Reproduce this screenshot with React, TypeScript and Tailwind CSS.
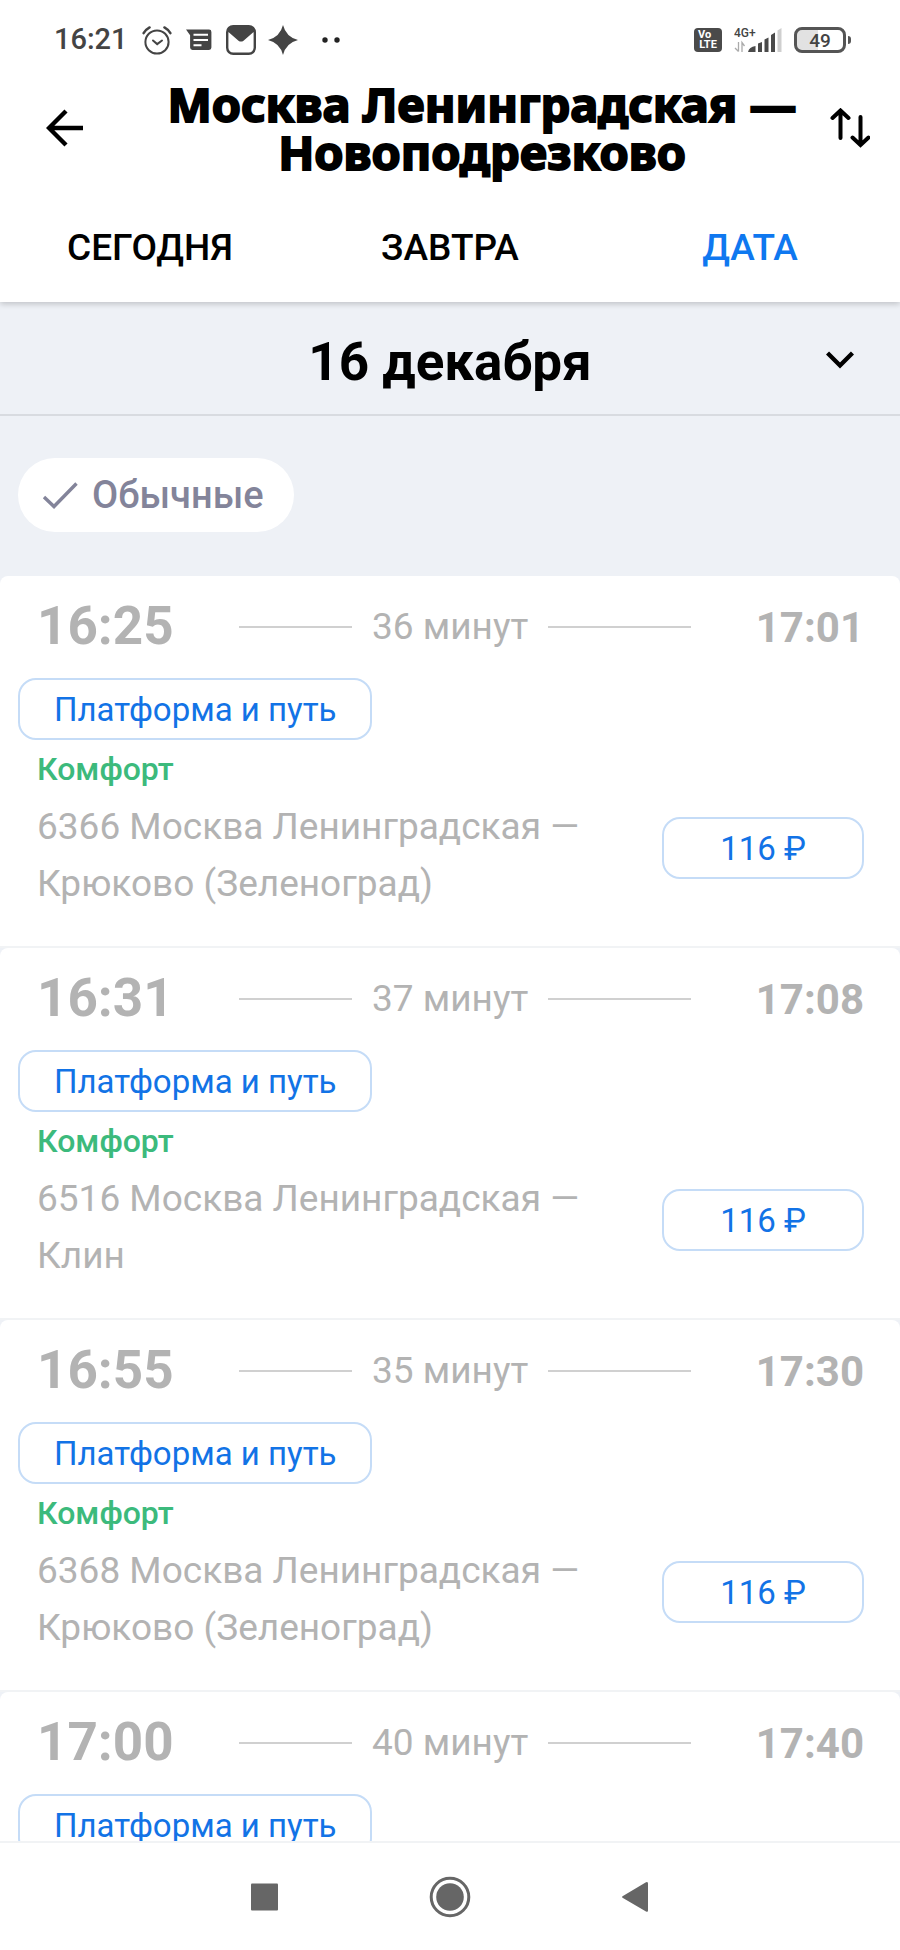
import React from 'react';

interface Train {
  departure: string;
  arrival: string;
  duration: string;
  route?: string;
  price?: string;
}

const trains: Train[] = [
  { departure: '16:25', arrival: '17:01', duration: '36 минут', route: '6366 Москва Ленинградская — Крюково (Зеленоград)', price: '116 ₽' },
  { departure: '16:31', arrival: '17:08', duration: '37 минут', route: '6516 Москва Ленинградская — Клин', price: '116 ₽' },
  { departure: '16:55', arrival: '17:30', duration: '35 минут', route: '6368 Москва Ленинградская — Крюково (Зеленоград)', price: '116 ₽' },
  { departure: '17:00', arrival: '17:40', duration: '40 минут' },
];

const tabs = ['СЕГОДНЯ', 'ЗАВТРА', 'ДАТА'];

const StatusBar: React.FC = () => (
  <div className="flex h-20 shrink-0 items-center justify-between pl-[54px] pr-[49px] text-[#444]">
    <div className="flex items-center">
      <span className="mr-3.5 text-[29px] font-medium">16:21</span>
      {/* Alarm */}
      <svg className="mr-3.5" width="30" height="30" viewBox="0 0 30 30" fill="none" stroke="currentColor" strokeLinecap="round">
        <circle cx="15" cy="17" r="11.6" strokeWidth="2" />
        <path d="M11 15.5l4.2 3.6 4.8-3.6" strokeWidth="2" />
        <path d="M1.6 8.2Q3.6 4.6 7.6 2.4M28.4 8.2Q26.4 4.6 22.4 2.4" strokeWidth="2.4" />
      </svg>
      {/* Message */}
      <svg className="mr-3.5" width="26" height="22" viewBox="0 0 26 22">
        <path d="M0 .5h23a2.4 2.4 0 0 1 2.4 2.4v15.6a2.4 2.4 0 0 1-2.4 2.4H6.5a2.4 2.4 0 0 1-2.4-2.4V6.2z" fill="currentColor" />
        <path d="M7.5 5.8h14.5M7.5 11h14.5M7.5 16.2h8" stroke="#fff" strokeWidth="2" />
      </svg>
      {/* Mail */}
      <svg className="mr-3" width="30" height="30" viewBox="0 0 30 30">
        <rect x="1.2" y="1.2" width="27.6" height="27.6" rx="6" fill="none" stroke="currentColor" strokeWidth="2.4" />
        <path d="M2 7V4.5Q3 1.5 7 1.5h16q4 0 5 3V7l-1 .5-9.5 8.2q-2.5 1.8-5 0L3 7.5z" fill="currentColor" />
      </svg>
      {/* Sparkle */}
      <svg className="mr-6" width="30" height="30" viewBox="0 0 30 30" fill="currentColor">
        <path d="M15 0Q18 12 30 15 18 18 15 30 12 18 0 15 12 12 15 0z" />
      </svg>
      <svg width="18" height="6" viewBox="0 0 18 6" fill="#222">
        <circle cx="3" cy="3" r="2.7" />
        <circle cx="15" cy="3" r="2.7" />
      </svg>
    </div>

    <div className="flex items-center">
      <div className="mr-3 flex h-6 w-7 flex-col items-center justify-center rounded bg-[#4a4a4a] text-[11px] font-bold leading-[10px] text-white">
        <span className="self-start pl-1">Vo</span>
        <span>LTE</span>
      </div>
      {/* Network signal */}
      <svg className="mr-3" width="48" height="28" viewBox="0 0 48 28">
        <text x="0" y="11" fontSize="12" fontWeight="500" fill="#444">4G+</text>
        <path d="M4.5 16v9.5M1 22l3.5 3.5M8 26V16.5l2.5 3.5" fill="none" stroke="#aaa" strokeWidth="1.3" />
        <path d="M14 26q1-5 7.5-6v6zM24 17.5l4-1.5v10h-4zM30.5 13.5l4-2v14.5h-4zM37 9l4-2.5V26h-4z" fill="#4a4a4a" />
        <path d="M43.5 4.5l4-2.5v24h-4z" fill="#cfcfcf" />
      </svg>
      <div className="flex h-[26px] w-[52px] items-center justify-center rounded-lg border-3 border-[#555] bg-linear-to-r from-[#e2e2e2] from-45% to-white to-45% text-[19px] font-medium leading-none">
        49
      </div>
      <div className="ml-0.5 h-2 w-[3px] rounded-r bg-[#555]" />
    </div>
  </div>
);

const TrainCard: React.FC<{ train: Train }> = ({ train }) => (
  <li className="rounded-t-lg border-b-2 border-[#f1f3f5] bg-white pb-[34px] text-[#b3b3b3]">
    <div className="flex h-[102px] items-center pr-9 pl-[37px]">
      <time className="w-[202px] text-[53px] font-bold">{train.departure}</time>
      <div className="flex flex-1 items-center">
        <span className="h-0.5 w-1/4 bg-[#d0d0d0]" />
        <span className="mx-5 whitespace-nowrap text-[37px]">{train.duration}</span>
        <span className="h-0.5 flex-1 bg-[#d0d0d0]" />
      </div>
      <time className="w-[173px] text-right text-[42px] font-bold">{train.arrival}</time>
    </div>
    <button type="button" className="ml-[18px] block h-[62px] rounded-[18px] border-2 border-[#c5dcf7] px-[34px] pt-0.5 text-[33px] text-[#1273e6]">
      Платформа и путь
    </button>
    {train.route && (
      <>
        <div className="pl-[37px] text-[32px] font-medium leading-[58px] text-[#3cba7c]">Комфорт</div>
        <div className="flex items-start justify-between pr-9 pl-[37px]">
          <p className="flex-1 pr-6 text-[37px] leading-[57px]">{train.route}</p>
          <button type="button" className="mt-[19px] h-[62px] w-[202px] rounded-[18px] border-2 border-[#c5dcf7] pt-0.5 text-[33px] text-[#1273e6]">
            {train.price}
          </button>
        </div>
      </>
    )}
  </li>
);

const App: React.FC = () => (
  <div className="flex h-screen flex-col bg-white font-['Roboto','Noto_Sans',sans-serif]">
    <header className="relative z-10 shrink-0 bg-white shadow-[0_2px_6px_rgba(0,0,0,0.2)]">
      <StatusBar />
      <div className="flex items-center pb-4">
        <button type="button" aria-label="Назад" className="w-[134px] shrink-0 pl-[46px]">
          <svg width="38" height="38" viewBox="0 0 38 38" fill="none" stroke="#000" strokeWidth="4.4">
            <path d="M37 19H3M20 2L3 19l17 17" />
          </svg>
        </button>
        <h1 className="flex-1 text-center font-['Noto_Sans',sans-serif] text-[47px] font-bold leading-[48px] text-black [-webkit-text-stroke:2px_#000]">
          Москва Ленинградская — Новоподрезково
        </h1>
        <button type="button" aria-label="Поменять местами" className="w-[70px] shrink-0">
          <svg width="40" height="40" viewBox="0 0 40 40" fill="none" stroke="#000" strokeWidth="4" strokeLinecap="round">
            <path d="M10.5 30V3M2.5 10l8-7.5 8 7.5M30.5 9v28M22.5 29.5l8 7.5 8-7.5" />
          </svg>
        </button>
      </div>
      <nav className="grid h-[110px] grid-cols-3 pt-0.5">
        {tabs.map((tab) => (
          <button key={tab} type="button" className={`text-[37px] font-medium ${tab === 'ДАТА' ? 'text-[#0f78f0]' : 'text-black'}`}>
            {tab}
          </button>
        ))}
      </nav>
    </header>

    <main className="flex-1 overflow-hidden bg-[#eef1f6]">
      <button type="button" className="grid h-[114px] w-full grid-cols-[1fr_auto_1fr] items-center border-b-2 border-[#d8dbe0] px-[46px] pt-1 text-black">
        <span className="col-start-2 pt-1.5 text-[53px] font-bold">16 декабря</span>
        <svg className="justify-self-end" width="28" height="18" viewBox="0 0 28 18" fill="none" stroke="#000" strokeWidth="4.4">
          <path d="M1.5 2L14 14.5 26.5 2" />
        </svg>
      </button>

      <div className="px-[18px] pt-[42px] pb-11">
        <label className="inline-flex h-[74px] items-center rounded-full bg-white pr-[30px] pl-6 align-top text-[38px] font-medium text-[#83849a]">
          <span className="mr-3.5 grid">
            <input type="checkbox" defaultChecked className="peer col-start-1 row-start-1 size-9 appearance-none" />
            <svg className="pointer-events-none col-start-1 row-start-1 hidden peer-checked:block" width="36" height="36" viewBox="0 0 36 36" fill="none" stroke="currentColor" strokeWidth="3.4">
              <path d="M2 20l10 9.5L34.5 6.5" />
            </svg>
          </span>
          Обычные
        </label>
      </div>

      <ul>
        {trains.map((train) => (
          <TrainCard key={train.departure} train={train} />
        ))}
      </ul>
    </main>

    <footer className="flex h-[109px] shrink-0 items-center justify-center gap-[150px] border-t-2 border-[#f1f3f5] bg-white text-[#666]">
      <button type="button" aria-label="Недавние">
        <svg width="28" height="42" viewBox="0 0 28 42" fill="currentColor">
          <rect x="0" y="7.5" width="27" height="27" rx="1" />
        </svg>
      </button>
      <button type="button" aria-label="Домой">
        <svg width="42" height="42" viewBox="0 0 42 42">
          <circle cx="21" cy="21" r="18.8" fill="none" stroke="currentColor" strokeWidth="3" />
          <circle cx="21" cy="21" r="13.8" fill="currentColor" />
        </svg>
      </button>
      <button type="button" aria-label="Назад в системе">
        <svg width="28" height="42" viewBox="0 0 28 42" fill="currentColor">
          <path d="M1.5 20.2L25 6.3q2-1 2 1.2v27q0 2-2 1L1.5 21.8q-1-.8 0-1.6z" />
        </svg>
      </button>
    </footer>
  </div>
);

export default App;
